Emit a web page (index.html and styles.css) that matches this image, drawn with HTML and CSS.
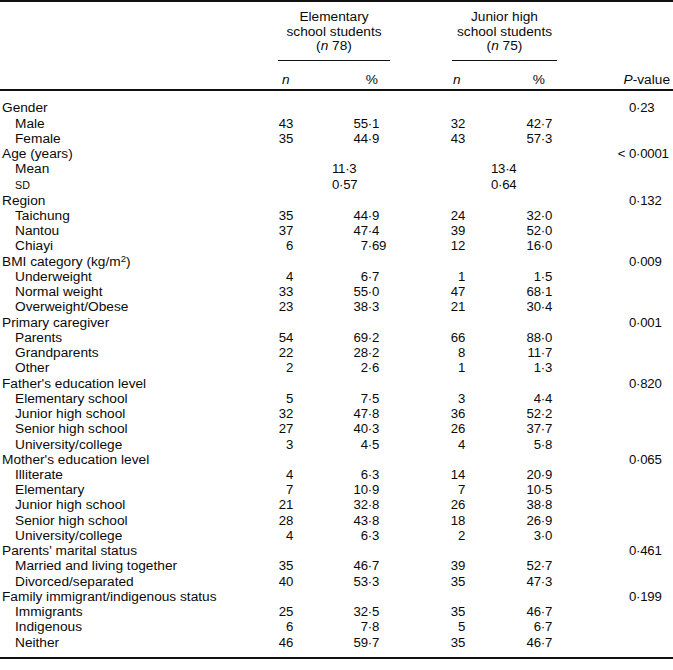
FILE: index.html
```html
<!DOCTYPE html>
<html lang="en">
<head>
<meta charset="utf-8">
<title>Table</title>
<link rel="stylesheet" href="styles.css">
</head>
<body>
<table class="t">
  <colgroup>
    <col class="c-label">
    <col class="c-en">
    <col class="c-ep">
    <col class="c-gap">
    <col class="c-jn">
    <col class="c-jp">
    <col class="c-p">
  </colgroup>
  <thead>
    <tr class="hd1">
      <th></th>
      <th colspan="2" class="grp"><div class="grp-in">Elementary<br>school students<br>(<i>n</i> 78)</div></th>
      <th></th>
      <th colspan="2" class="grp"><div class="grp-in jr">Junior high<br>school students<br>(<i>n</i> 75)</div></th>
      <th></th>
    </tr>
    <tr class="hd2">
      <th></th>
      <th class="hn en"><i>n</i></th>
      <th class="hp ep">%</th>
      <th></th>
      <th class="hn jn"><i>n</i></th>
      <th class="hp jp">%</th>
      <th class="hpv"><i>P</i>-value</th>
    </tr>
  </thead>
  <tbody>
    <tr class="first"><td class="cat">Gender</td><td></td><td></td><td></td><td></td><td></td><td class="pv">0·23</td></tr>
    <tr><td class="sub">Male</td><td class="en">43</td><td class="ep">55·1</td><td></td><td class="jn">32</td><td class="jp">42·7</td><td></td></tr>
    <tr><td class="sub">Female</td><td class="en">35</td><td class="ep">44·9</td><td></td><td class="jn">43</td><td class="jp">57·3</td><td></td></tr>
    <tr><td class="cat">Age (years)</td><td></td><td></td><td></td><td></td><td></td><td class="pv"><span class="lt">&lt; </span>0·0001</td></tr>
    <tr><td class="sub">Mean</td><td colspan="2" class="em">11·3</td><td></td><td colspan="2" class="jm">13·4</td><td></td></tr>
    <tr><td class="sub"><span class="sc">SD</span></td><td colspan="2" class="em">0·57</td><td></td><td colspan="2" class="jm">0·64</td><td></td></tr>
    <tr><td class="cat">Region</td><td></td><td></td><td></td><td></td><td></td><td class="pv">0·132</td></tr>
    <tr><td class="sub">Taichung</td><td class="en">35</td><td class="ep">44·9</td><td></td><td class="jn">24</td><td class="jp">32·0</td><td></td></tr>
    <tr><td class="sub">Nantou</td><td class="en">37</td><td class="ep">47·4</td><td></td><td class="jn">39</td><td class="jp">52·0</td><td></td></tr>
    <tr><td class="sub">Chiayi</td><td class="en">6</td><td class="ep">7·6<span class="xd">9</span></td><td></td><td class="jn">12</td><td class="jp">16·0</td><td></td></tr>
    <tr><td class="cat">BMI category (kg/m<sup>2</sup>)</td><td></td><td></td><td></td><td></td><td></td><td class="pv">0·009</td></tr>
    <tr><td class="sub">Underweight</td><td class="en">4</td><td class="ep">6·7</td><td></td><td class="jn">1</td><td class="jp">1·5</td><td></td></tr>
    <tr><td class="sub">Normal weight</td><td class="en">33</td><td class="ep">55·0</td><td></td><td class="jn">47</td><td class="jp">68·1</td><td></td></tr>
    <tr><td class="sub">Overweight/Obese</td><td class="en">23</td><td class="ep">38·3</td><td></td><td class="jn">21</td><td class="jp">30·4</td><td></td></tr>
    <tr><td class="cat">Primary caregiver</td><td></td><td></td><td></td><td></td><td></td><td class="pv">0·001</td></tr>
    <tr><td class="sub">Parents</td><td class="en">54</td><td class="ep">69·2</td><td></td><td class="jn">66</td><td class="jp">88·0</td><td></td></tr>
    <tr><td class="sub">Grandparents</td><td class="en">22</td><td class="ep">28·2</td><td></td><td class="jn">8</td><td class="jp">11·7</td><td></td></tr>
    <tr><td class="sub">Other</td><td class="en">2</td><td class="ep">2·6</td><td></td><td class="jn">1</td><td class="jp">1·3</td><td></td></tr>
    <tr><td class="cat">Father's education level</td><td></td><td></td><td></td><td></td><td></td><td class="pv">0·820</td></tr>
    <tr><td class="sub">Elementary school</td><td class="en">5</td><td class="ep">7·5</td><td></td><td class="jn">3</td><td class="jp">4·4</td><td></td></tr>
    <tr><td class="sub">Junior high school</td><td class="en">32</td><td class="ep">47·8</td><td></td><td class="jn">36</td><td class="jp">52·2</td><td></td></tr>
    <tr><td class="sub">Senior high school</td><td class="en">27</td><td class="ep">40·3</td><td></td><td class="jn">26</td><td class="jp">37·7</td><td></td></tr>
    <tr><td class="sub">University/college</td><td class="en">3</td><td class="ep">4·5</td><td></td><td class="jn">4</td><td class="jp">5·8</td><td></td></tr>
    <tr><td class="cat">Mother's education level</td><td></td><td></td><td></td><td></td><td></td><td class="pv">0·065</td></tr>
    <tr><td class="sub">Illiterate</td><td class="en">4</td><td class="ep">6·3</td><td></td><td class="jn">14</td><td class="jp">20·9</td><td></td></tr>
    <tr><td class="sub">Elementary</td><td class="en">7</td><td class="ep">10·9</td><td></td><td class="jn">7</td><td class="jp">10·5</td><td></td></tr>
    <tr><td class="sub">Junior high school</td><td class="en">21</td><td class="ep">32·8</td><td></td><td class="jn">26</td><td class="jp">38·8</td><td></td></tr>
    <tr><td class="sub">Senior high school</td><td class="en">28</td><td class="ep">43·8</td><td></td><td class="jn">18</td><td class="jp">26·9</td><td></td></tr>
    <tr><td class="sub">University/college</td><td class="en">4</td><td class="ep">6·3</td><td></td><td class="jn">2</td><td class="jp">3·0</td><td></td></tr>
    <tr><td class="cat">Parents' marital status</td><td></td><td></td><td></td><td></td><td></td><td class="pv">0·461</td></tr>
    <tr><td class="sub">Married and living together</td><td class="en">35</td><td class="ep">46·7</td><td></td><td class="jn">39</td><td class="jp">52·7</td><td></td></tr>
    <tr><td class="sub">Divorced/separated</td><td class="en">40</td><td class="ep">53·3</td><td></td><td class="jn">35</td><td class="jp">47·3</td><td></td></tr>
    <tr><td class="cat">Family immigrant/indigenous status</td><td></td><td></td><td></td><td></td><td></td><td class="pv">0·199</td></tr>
    <tr><td class="sub">Immigrants</td><td class="en">25</td><td class="ep">32·5</td><td></td><td class="jn">35</td><td class="jp">46·7</td><td></td></tr>
    <tr><td class="sub">Indigenous</td><td class="en">6</td><td class="ep">7·8</td><td></td><td class="jn">5</td><td class="jp">6·7</td><td></td></tr>
    <tr class="last"><td class="sub">Neither</td><td class="en">46</td><td class="ep">59·7</td><td></td><td class="jn">35</td><td class="jp">46·7</td><td></td></tr>
  </tbody>
</table>
</body>
</html>
```

FILE: styles.css
```css
html, body {
  margin: 0;
  padding: 0;
  background: #fff;
}

body {
  font-family: "Liberation Sans", Arial, Helvetica, sans-serif;
  font-size: 13.7px;
  color: #0a0a0a;
}

.t {
  width: 673px;
  border-collapse: collapse;
  table-layout: fixed;
  border-top: 2px solid #111;
  border-bottom: 2px solid #111;
}

.c-label { width: 276px; }
.c-en { width: 20px; }
.c-ep { width: 96px; }
.c-gap { width: 58px; }
.c-jn { width: 18px; }
.c-jp { width: 90px; }
.c-p { width: 115px; }

.t th,
.t td {
  padding: 0;
  line-height: 15.24px;
  font-weight: normal;
  white-space: nowrap;
  vertical-align: baseline;
}

/* header row 1 */
.t .hd1 th {
  vertical-align: top;
  padding-top: 8px;
}

.grp {
  text-align: center;
}

.grp-in {
  line-height: 14.7px;
  padding-bottom: 6px;
  border-bottom: 1px solid #111;
  margin: 0 2px;
}

.grp-in.jr {
  margin: 0 1px 0 2px;
}

/* header row 2 */
.t .hd2 th {
  padding-top: 11px;
  padding-bottom: 2px;
  border-bottom: 2px solid #111;
}

.t th.hn { text-align: left; }
.t th.hn.en { padding-left: 6px; }
.t th.hn.jn { padding-left: 3px; }
.t th.hp { text-align: right; }
.t th.hp.ep { padding-right: 14px; }
.t th.hp.jp { padding-right: 13px; }
.t th.hpv {
  text-align: right;
  padding-right: 3px;
}

/* body */
.t .first td { padding-top: 9px; }
.t .last td { padding-bottom: 7px; }

.t td.cat { padding-left: 2px; }
.t td.sub { padding-left: 15px; }

.t td.en,
.t td.jn,
.t td.ep,
.t td.jp,
.t td.em,
.t td.jm,
.t td.pv {
  font-size: 13.2px;
  letter-spacing: -0.25px;
}

.t td.en,
.t td.jn {
  text-align: right;
  padding-right: 3px;
}

.t td.ep,
.t td.jp { text-align: right; }
.t td.ep { padding-right: 13px; }
.t td.jp { padding-right: 6px; }

.t td.em { padding-left: 56px; text-align: left; }
.t td.jm { padding-left: 41px; text-align: left; }

.t td.pv {
  text-align: left;
  padding-left: 71px;
}

.lt {
  margin-left: -0.86em;
  letter-spacing: 0;
}

.xd { margin-right: -0.54em; }

.sc {
  font-size: 0.78em;
  letter-spacing: 0.02em;
}

sup {
  font-size: 0.7em;
  line-height: 0;
  vertical-align: 0.45em;
}
```
